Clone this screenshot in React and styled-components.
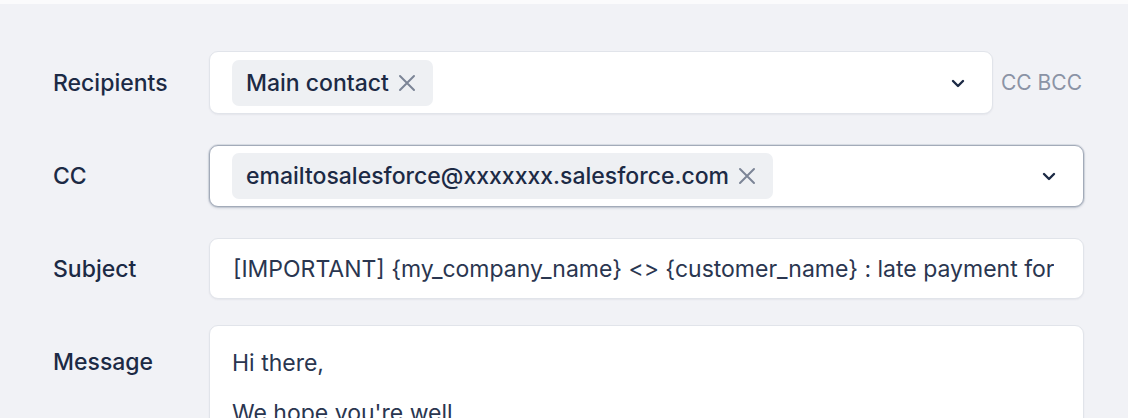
import React from 'react';
import styled, { createGlobalStyle } from 'styled-components';

const Global = createGlobalStyle`
  body {
    margin: 0;
    background: #f1f2f6;
    font-family: Inter, "Noto Sans", sans-serif;
    color: #1c2a45;
  }
`;

const Page = styled.div`
  border-top: 4px solid #fbfbfc;
  padding: 47px 44px 0 53px;
  display: flex;
  flex-direction: column;
  height: 418px;
  box-sizing: border-box;
  overflow: hidden;
`;

const Row = styled.div`
  display: flex;
  align-items: ${p => (p.$top ? 'flex-start' : 'center')};
  margin-bottom: ${p => p.$gap || 31}px;
`;

const Label = styled.div`
  width: 156px;
  flex: none;
  font-size: 23px;
  font-weight: 500;
  padding-top: ${p => (p.$top ? '23px' : '0')};
`;

const Field = styled.div`
  flex: ${p => (p.$shrink ? '0 0 784px' : '1')};
  display: flex;
  align-items: center;
  height: ${p => p.$h || 63}px;
  box-sizing: border-box;
  background: #fff;
  border: 1px solid ${p => (p.$focus ? '#a3abb9' : '#e1e4ea')};
  border-radius: 9px;
  box-shadow: ${p =>
    p.$focus
      ? '0 1px 3px rgba(30, 42, 70, 0.18), 0 0 0 1px rgba(200, 206, 216, 0.5)'
      : '0 1px 2px rgba(30, 42, 70, 0.06)'};
  padding: 0 22px 0 22px;
`;

const Chips = styled.div`
  flex: 1;
  display: flex;
  gap: 8px;
`;

const Chip = styled.span`
  display: inline-flex;
  align-items: center;
  gap: 9px;
  height: 46px;
  padding: 0 17px 0 14px;
  background: #eef0f3;
  border-radius: 7px;
  font-size: 23px;
  font-weight: 500;
  color: #1c2a45;
`;

const Remove = styled.span`
  display: inline-flex;
  color: #7c8596;
`;

const Chevron = styled.span`
  display: inline-flex;
  color: #1c2a45;
  margin-right: 4px;
`;

const Extra = styled.div`
  margin-left: 8px;
  font-size: 21px;
  color: #8a93a5;
  white-space: nowrap;
`;

const Text = styled.div`
  font-size: 23px;
  color: #2a3650;
  white-space: nowrap;
  overflow: hidden;
  padding-left: 1px;
`;

const Body = styled.div`
  flex: 1;
  min-height: 200px;
  box-sizing: border-box;
  background: #fff;
  border: 1px solid #e1e4ea;
  border-radius: 9px;
  box-shadow: 0 1px 2px rgba(30, 42, 70, 0.06);
  padding: 23px 22px;
  font-size: 23px;
  line-height: 28px;
  color: #2a3650;
  p {
    margin: 0 0 22px;
  }
`;

const X = () => (
  <svg width="18" height="18" viewBox="0 0 18 18" fill="none" stroke="currentColor" strokeWidth="2" strokeLinecap="round">
    <path d="M2 2l14 14M16 2L2 16" />
  </svg>
);

const Down = () => (
  <svg width="16" height="16" viewBox="0 0 16 16" fill="none" stroke="currentColor" strokeWidth="2.4" strokeLinecap="round" strokeLinejoin="round">
    <path d="M3 6l5 5 5-5" />
  </svg>
);

export default function App() {
  return (
    <>
      <Global />
      <Page>
        <Row>
          <Label>Recipients</Label>
          <Field $shrink>
            <Chips>
              <Chip>Main contact <Remove><X /></Remove></Chip>
            </Chips>
            <Chevron><Down /></Chevron>
          </Field>
          <Extra>CC BCC</Extra>
        </Row>
        <Row $gap={31}>
          <Label>CC</Label>
          <Field $focus $h={62}>
            <Chips>
              <Chip>emailtosalesforce@xxxxxxx.salesforce.com <Remove><X /></Remove></Chip>
            </Chips>
            <Chevron><Down /></Chevron>
          </Field>
        </Row>
        <Row $gap={26}>
          <Label>Subject</Label>
          <Field $h={61}>
            <Text>[IMPORTANT] {'{my_company_name}'} &lt;&gt; {'{customer_name}'} : late payment for</Text>
          </Field>
        </Row>
        <Row $top>
          <Label $top>Message</Label>
          <Body>
            <p>Hi there,</p>
            <p>We hope you're well.</p>
          </Body>
        </Row>
      </Page>
    </>
  );
}
